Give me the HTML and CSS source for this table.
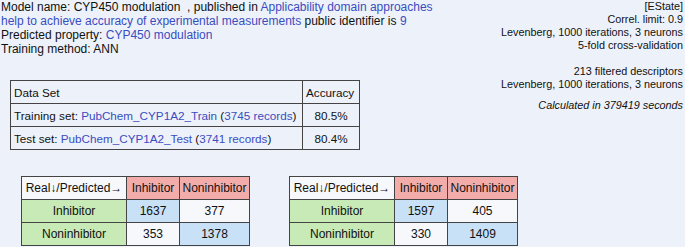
FILE: index.html
```html
<!DOCTYPE html>
<html>
<head>
<meta charset="utf-8">
<link rel="stylesheet" href="styles.css">
</head>
<body>
<div class="top">
  <div class="left">
    <div class="info">
      <div>Model name: CYP450 modulation &nbsp;, published in <a class="lnk">Applicability domain approaches</a></div>
      <div><a class="lnk">help to achieve accuracy of experimental measurements</a> public identifier is <a class="lnk">9</a></div>
      <div>Predicted property: <a class="lnk">CYP450 modulation</a></div>
      <div>Training method: ANN</div>
    </div>
    <table class="ds">
      <tr><td class="c1">Data Set</td><td class="c2">Accuracy</td></tr>
      <tr><td class="c1">Training set: <a class="lnk">PubChem_CYP1A2_Train</a> (<a class="lnk">3745 records</a>)</td><td class="c2 num">80.5%</td></tr>
      <tr><td class="c1">Test set: <a class="lnk">PubChem_CYP1A2_Test</a> (<a class="lnk">3741 records</a>)</td><td class="c2 num">80.4%</td></tr>
    </table>
  </div>
  <div class="right">
    <div>[EState]</div>
    <div>Correl. limit: 0.9</div>
    <div>Levenberg, 1000 iterations, 3 neurons</div>
    <div>5-fold cross-validation</div>
    <div class="blank"></div>
    <div>213 filtered descriptors</div>
    <div>Levenberg, 1000 iterations, 3 neurons</div>
    <div class="calc">Calculated in 379419 seconds</div>
  </div>
</div>
<div class="mats">
  <table class="cm">
    <tr><td class="hd">Real↓/Predicted→</td><td class="pk">Inhibitor</td><td class="pk">Noninhibitor</td></tr>
    <tr><td class="gr">Inhibitor</td><td class="bl">1637</td><td class="wh">377</td></tr>
    <tr><td class="gr">Noninhibitor</td><td class="wh">353</td><td class="bl">1378</td></tr>
  </table>
  <table class="cm">
    <tr><td class="hd">Real↓/Predicted→</td><td class="pk">Inhibitor</td><td class="pk">Noninhibitor</td></tr>
    <tr><td class="gr">Inhibitor</td><td class="bl">1597</td><td class="wh">405</td></tr>
    <tr><td class="gr">Noninhibitor</td><td class="wh">330</td><td class="bl">1409</td></tr>
  </table>
</div>
</body>
</html>
```
FILE: styles.css
```css
html, body {
  margin: 0;
  padding: 0;
  background: #edf2fa;
}
body {
  font-family: "Liberation Sans", Arial, sans-serif;
  font-size: 12px;
  color: #111;
  padding: 0 2px 0 1px;
}
.lnk {
  color: #3a4cc0;
  text-decoration: none;
}
.top {
  display: flex;
  justify-content: space-between;
}
.left {
  flex-shrink: 0;
}
.info {
  line-height: 14px;
}
.right {
  font-size: 10.8px;
  line-height: 13px;
  text-align: right;
}
.blank {
  height: 13px;
}
.calc {
  font-style: italic;
  margin-top: 8px;
}
table {
  border-collapse: collapse;
}
.ds {
  margin: 24px 0 0 9px;
  border: 1px solid #333;
  font-size: 11.7px;
}
.ds td {
  border: 1px solid #444;
  height: 22px;
  padding: 0 3px;
  white-space: nowrap;
}
.ds .c1 {
  width: 285px;
}
.ds .c2 {
  width: 50px;
}
.ds .num {
  text-align: center;
}
.mats {
  display: flex;
  gap: 39px;
  margin: 26px 0 0 20px;
}
.cm td {
  border: 1px solid #444;
  height: 22px;
  text-align: center;
  padding: 0 2px;
  white-space: nowrap;
}
.cm td:nth-child(1) { width: 100px; }
.cm td:nth-child(2) { width: 48px; }
.cm td:nth-child(3) { width: 65px; }
.cm .hd { background: #f6f8fc; }
.cm .pk { background: #f2adab; }
.cm .gr { background: #c8eab6; }
.cm .bl { background: #c9e1f6; }
.cm .wh { background: #f6f8fc; }
```
